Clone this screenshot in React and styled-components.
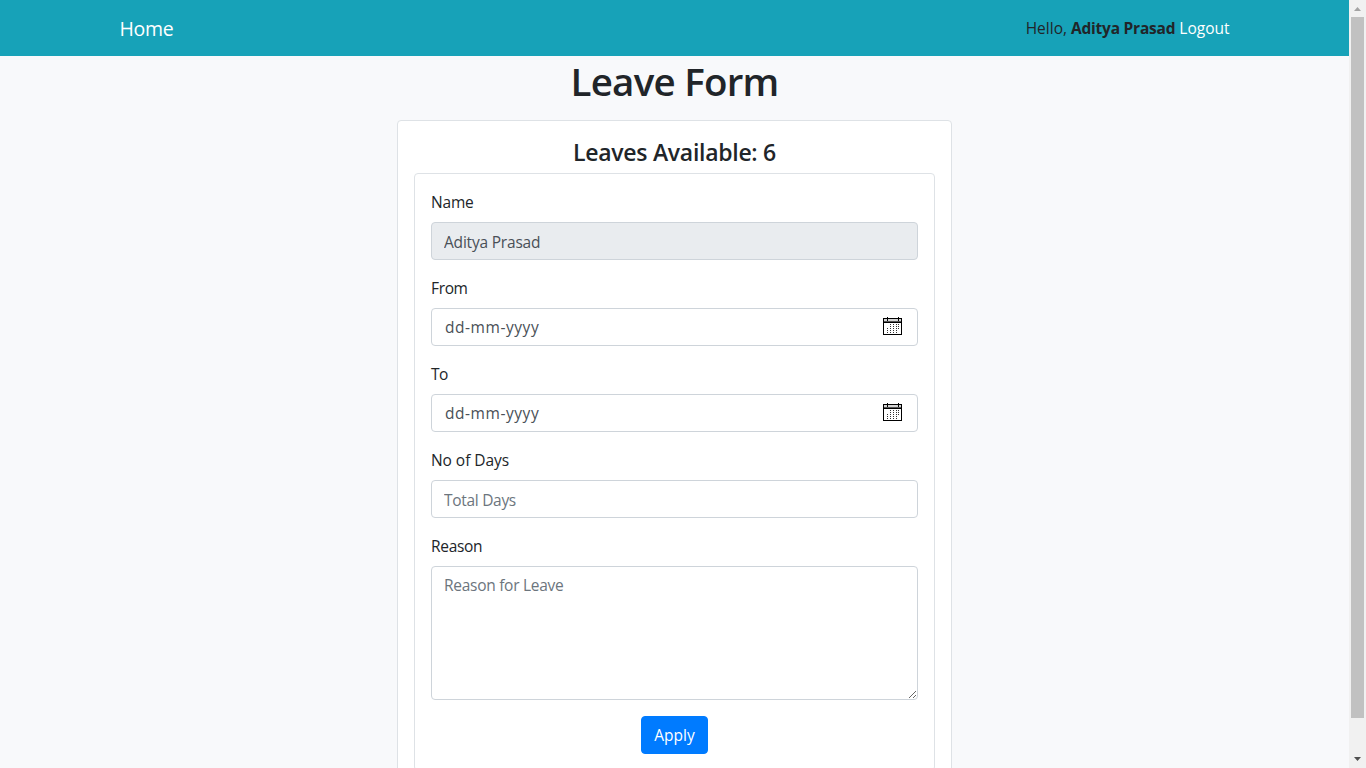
import React from "react";
import styled, { createGlobalStyle } from "styled-components";

const GlobalStyle = createGlobalStyle`
  *, *::before, *::after { box-sizing: border-box; }
  html, body { margin: 0; height: 100%; overflow: hidden; }
  body {
    font-family: "Open Sans", "Noto Sans", sans-serif;
    font-size: 15.5px;
    line-height: 24px;
    color: #212529;
    background: #f8f9fa;
  }
`;

const Window = styled.div`
  display: flex;
  height: 768px;
  overflow: hidden;
`;

const Page = styled.div`
  flex: 1;
  height: 768px;
  overflow: hidden;
  background: #f8f9fb;
`;

const Navbar = styled.nav`
  height: 56px;
  padding: 0 119.5px;
  display: flex;
  align-items: center;
  justify-content: space-between;
  background: #17a2b8;
`;

const Brand = styled.a`
  color: #fff;
  font-size: 19.5px;
  line-height: 30px;
  padding-top: 2px;
  letter-spacing: -0.3px;
`;

const Greeting = styled.span`
  display: flex;
  gap: 4px;
  letter-spacing: 0;
`;

const UserName = styled.strong`
  font-weight: 700;
  letter-spacing: -0.22px;
`;

const Logout = styled.a`
  color: #fff;
`;

const Title = styled.h1`
  margin: 0 0 16px;
  padding-top: 1px;
  height: 48px;
  font-size: 38.5px;
  line-height: 48px;
  font-weight: 600;
  text-align: center;
  letter-spacing: -0.75px;
`;

const Card = styled.section`
  width: 555px;
  margin: 0 auto;
  padding: 16px;
  background: #fff;
  border: 1px solid #dee2e6;
  border-radius: 4px;
`;

const Subtitle = styled.h2`
  margin: 0 0 8px;
  height: 28px;
  font-size: 23px;
  line-height: 30px;
  font-weight: 600;
  text-align: center;
  letter-spacing: -0.28px;
`;

const Form = styled.form`
  padding: 16px;
  border: 1px solid #dee2e6;
  border-radius: 4px;
  display: flex;
  flex-direction: column;
  gap: 16px;
`;

const Field = styled.label`
  display: flex;
  flex-direction: column;
  gap: 8px;
  letter-spacing: ${(p) => p.$track || "-0.2px"};
`;

const Control = styled.div`
  display: flex;
  align-items: center;
  height: 38px;
  padding: 0 14px 0 12px;
  border: 1px solid #ced4da;
  border-radius: 4px;
  background: ${(p) => (p.$disabled ? "#e9ecef" : "#fff")};
`;

const Input = styled.input`
  flex: 1;
  min-width: 0;
  height: 36px;
  padding: ${(p) => (p.$date ? "0 0 0 1px" : "2px 0 0")};
  border: 0;
  outline: 0;
  background: transparent;
  color: #495057;
  font: inherit;
  letter-spacing: ${(p) => p.$track};
  &::placeholder { color: ${(p) => (p.$date ? "#495057" : "#6c757d")}; opacity: 1; }
`;

const TextArea = styled.textarea`
  display: block;
  width: 100%;
  height: 134px;
  padding: 6px 12px;
  border: 1px solid #ced4da;
  border-radius: 4px;
  outline: 0;
  background: #fff;
  color: #495057;
  font: inherit;
  letter-spacing: -0.28px;
  resize: vertical;
  &::placeholder { color: #6c757d; opacity: 1; }
`;

const Apply = styled.button`
  align-self: center;
  width: 67px;
  height: 38px;
  padding: 0;
  border: 1px solid #007bff;
  border-radius: 4px;
  background: #007bff;
  color: #fff;
  font: inherit;
  letter-spacing: 0;
`;

const Scrollbar = styled.div`
  width: 17px;
  height: 768px;
  background: #f1f1f1;
  display: flex;
  flex-direction: column;
  align-items: center;
`;

const Arrow = styled.svg`
  display: block;
  width: 17px;
  height: 17px;
  fill: ${(p) => p.$color};
`;

const Thumb = styled.div`
  width: 13px;
  height: 701px;
  margin-bottom: auto;
  background: #c1c1c1;
`;

const CalendarSvg = styled.svg`
  display: block;
  width: 20px;
  height: 18px;
  margin-top: -2px;
`;

const dots = [
  [7, 7], [10, 7], [13, 7], [15, 7],
  [7, 9], [10, 9], [13, 9], [15, 9],
  [4, 11], [7, 11], [10, 11], [13, 11], [15, 11],
  [4, 13], [7, 13], [10, 13], [13, 13],
  [4, 15], [7, 15], [10, 15], [13, 15],
];

function Calendar() {
  return (
    <CalendarSvg viewBox="0 0 20 18" shapeRendering="crispEdges">
      <path d="M0 1h19v17H0z" fill="#000" />
      <path d="M1 2h17v2H1z" fill="#d5d5d5" />
      <path d="M1 4h17v1H1z" fill="#555" />
      <path d="M1 6h17v11H1z" fill="#fff" />
      <path d="M4 0h1v4H4zM15 0h1v4h-1z" fill="#000" />
      {dots.map(([x, y]) => (
        <rect key={`${x}-${y}`} x={x} y={y} width="1" height="1" fill="#333" />
      ))}
    </CalendarSvg>
  );
}

function DateField({ label, track }) {
  return (
    <Field $track={track}>
      {label}
      <Control>
        <Input $date $track="0.55px" placeholder="dd-mm-yyyy" />
        <Calendar />
      </Control>
    </Field>
  );
}

export default function App() {
  return (
    <Window>
      <GlobalStyle />
      <Page>
        <Navbar>
          <Brand>Home</Brand>
          <Greeting>
            <span>Hello,</span>
            <UserName>Aditya Prasad</UserName>
            <Logout>Logout</Logout>
          </Greeting>
        </Navbar>
        <Title>Leave Form</Title>
        <Card>
          <Subtitle>Leaves Available: 6</Subtitle>
          <Form>
            <Field>
              Name
              <Control $disabled>
                <Input $track="-0.2px" readOnly value="Aditya Prasad" />
              </Control>
            </Field>
            <DateField label="From" track="-0.35px" />
            <DateField label="To" track="-0.5px" />
            <Field $track="-0.05px">
              No of Days
              <Control>
                <Input $track="-0.3px" placeholder="Total Days" />
              </Control>
            </Field>
            <Field $track="-0.3px">
              Reason
              <TextArea placeholder="Reason for Leave" />
            </Field>
            <Apply type="button">Apply</Apply>
          </Form>
        </Card>
      </Page>
      <Scrollbar>
        <Arrow $color="#a3a3a3" viewBox="0 0 17 17"><path d="M5 11h7L8.500 7z" /></Arrow>
        <Thumb />
        <Arrow $color="#505050" viewBox="0 0 17 17"><path d="M5 6h7L8.500 10z" /></Arrow>
      </Scrollbar>
    </Window>
  );
}
